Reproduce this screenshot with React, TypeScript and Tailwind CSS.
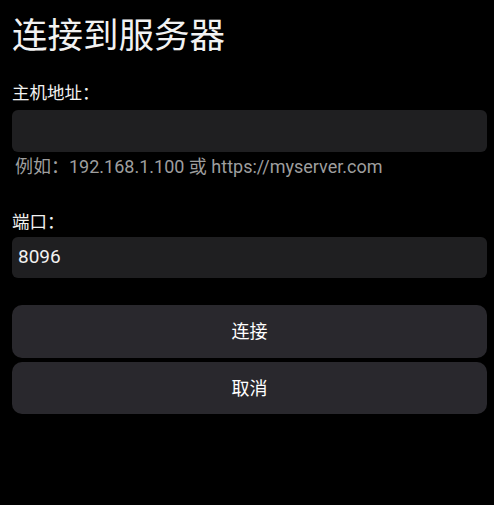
export default function App() {
  const font = { fontFamily: 'Roboto, "Noto Sans CJK SC", sans-serif' };
  return (
    <div className="w-[494px] h-[505px] bg-black text-[#f2f2f2] overflow-hidden" style={font}>
      <div className="pl-[12px] pr-[7px] pt-[14px] flex flex-col">
        <h1 className="text-[35.5px] leading-[44px] font-normal">连接到服务器</h1>

        <label className="mt-[23px] text-[17.5px] leading-[24px]">主机地址：</label>
        <div className="mt-[5px] h-[42px] rounded-[6px] bg-[#1f1f21]" />
        <p className="mt-[3px] pl-[3px] text-[18px] leading-[24px] text-[#9e9e9e]">
          例如：192.168.1.100 或 https://myserver.com
        </p>

        <label className="mt-[31px] text-[17.5px] leading-[24px]">端口：</label>
        <div className="mt-[3px] h-[41px] rounded-[6px] bg-[#1f1f21] flex items-center px-[6px] text-[19px]">
          8096
        </div>

        <div className="mt-[27px] flex flex-col gap-[4px]">
          <button className="h-[53px] rounded-[10px] bg-[#29282d] text-[18px] text-white">连接</button>
          <button className="h-[52px] rounded-[10px] bg-[#29282d] text-[18px] text-white">取消</button>
        </div>
      </div>
    </div>
  );
}
